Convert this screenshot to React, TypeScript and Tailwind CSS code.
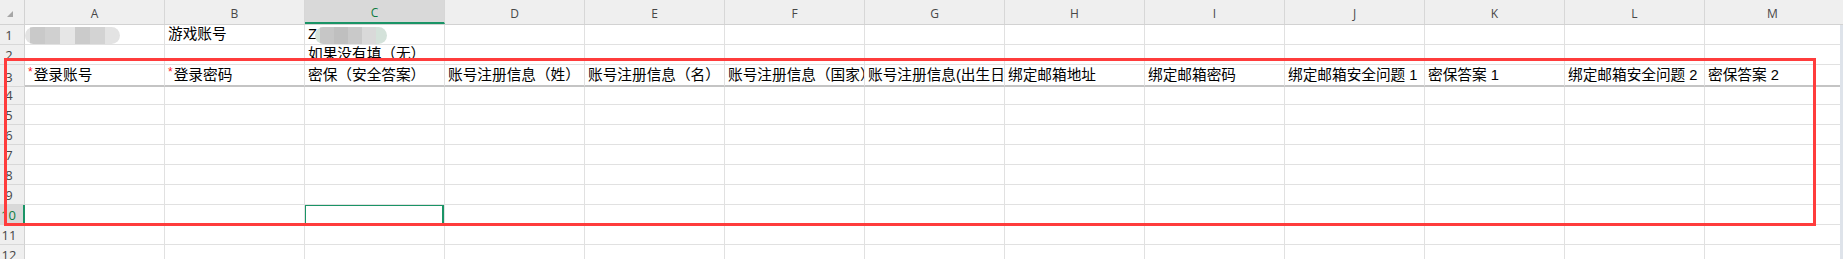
import React from "react"

const cols = ["A", "B", "C", "D", "E", "F", "G", "H", "I", "J", "K", "L", "M"]
const textFont = "font-['Liberation_Sans','Noto_Sans_CJK_SC',sans-serif]"

// blurred placeholder blocks used where the original had masked values
function Blob({ blocks, edge }: { blocks: string[]; edge: string }) {
  return (
    <div className="flex h-[17px] overflow-hidden rounded-full blur-[0.6px]" style={{ backgroundColor: edge }}>
      <div className="w-[5px]" />
      {blocks.map((c, i) => (
        <div key={i} className="w-[15px]" style={{ backgroundColor: c }} />
      ))}
      <div className="w-[12px]" />
    </div>
  )
}

function Star({ children }: { children: React.ReactNode }) {
  return (
    <>
      <span className="text-[#ff2020] text-[12px] relative top-[-3px] mr-[1px]">*</span>
      {children}
    </>
  )
}

const row3 = [
  <Star>登录账号</Star>,
  <Star>登录密码</Star>,
  "密保（安全答案）",
  "账号注册信息（姓）",
  "账号注册信息（名）",
  "账号注册信息（国家）",
  "账号注册信息(出生日期)",
  "绑定邮箱地址",
  "绑定邮箱密码",
  "绑定邮箱安全问题 1",
  "密保答案 1",
  "绑定邮箱安全问题 2",
  "密保答案 2",
]

const rows: { n: number; h: string; cells: Record<number, React.ReactNode> }[] = [
  {
    n: 1,
    h: "h-[20px]",
    cells: {
      0: (
        <div className="absolute left-0 top-[2px] w-[95px]">
          <Blob blocks={["#c9c9c9", "#d0d0d0", "#e6e6e6", "#cbcbcb", "#d3d3d3"]} edge="#e3e3e3" />
        </div>
      ),
      1: "游戏账号",
      2: (
        <>
          <span>Z</span>
          <div className="absolute left-[10px] top-[2px] w-[72px]">
            <Blob blocks={["#c6c6c6", "#bfbfbf", "#c9c9c9", "#d9d9d9"]} edge="#d4e2da" />
          </div>
        </>
      ),
    },
  },
  { n: 2, h: "h-[20px]", cells: { 2: "如果没有填（无）" } },
  { n: 3, h: "h-[22px]", cells: Object.fromEntries(row3.map((c, i) => [i, c])) },
  { n: 4, h: "h-[18px]", cells: {} },
  ...[5, 6, 7, 8, 9, 10, 11, 12].map((n) => ({ n, h: "h-[20px]", cells: {} })),
]

export default function App() {
  return (
    <div className="relative w-[1843px] h-[259px] overflow-hidden bg-white">
      {/* column headers */}
      <div className="flex h-[25px] bg-[#efefef] border-b border-[#d2d2d2]">
        <div className="relative w-[25px] shrink-0 border-r border-[#d2d2d2]">
          <div className="absolute left-[7px] top-[11px] w-0 h-0 border-l-[6px] border-l-transparent border-b-[6px] border-b-[#a6a6a6]" />
        </div>
        {cols.map((c, i) => (
          <div
            key={c}
            className={`flex items-center justify-center pt-[3px] shrink-0 ${i === 12 ? "w-[135px]" : "w-[140px] border-r border-[#d7d7d7]"} font-['Open_Sans',sans-serif] text-[12px] ${
              c === "C" ? "bg-[#d9d9d9] text-[#107c41] border-b-2 border-b-[#1a9466]" : "text-[#474747]"
            }`}
          >
            {c}
          </div>
        ))}
        <div className="w-[3px] shrink-0" />
      </div>

      {rows.map((r) => (
        <div key={r.n} className={`flex ${r.h}`}>
          <div
            className={`flex items-end justify-center pr-[6px] pb-[2px] w-[25px] shrink-0 border-b border-[#d8d8d8] font-['Open_Sans',sans-serif] text-[13px] leading-none ${
              r.n === 10 ? "bg-[#d9d9d9] text-[#107c41] border-r-2 border-r-[#1a9466]" : "bg-[#efefef] text-[#474747] border-r border-r-[#d2d2d2]"
            }`}
          >
            {r.n}
          </div>
          {cols.map((c, i) => (
            <div
              key={c}
              className={`relative flex items-end shrink-0 whitespace-nowrap pl-[3px] pb-[1px] ${i === 12 ? "w-[135px]" : "w-[140px] border-r border-r-[#e1e1e1]"} ${
                r.n === 3 ? "border-b-2 border-b-[#c4c4c4]" : "border-b border-b-[#e1e1e1]"
              } ${r.n === 1 ? "" : "overflow-hidden"} ${textFont} text-[14.67px] leading-[18px] text-black`}
            >
              {r.cells[i]}
              {r.n === 10 && c === "C" && (
                <>
                  <div className="absolute left-[-1px] top-[-1px] w-[140px] h-[21px] border-2 border-[#1a9466]" />
                  <div className="absolute left-[136px] top-[18px] w-[6px] h-[6px] bg-[#1a9466] border border-white" />
                </>
              )}
            </div>
          ))}
          <div className="w-[3px] shrink-0 bg-[#dee3ea]" />
        </div>
      ))}

      {/* highlight box drawn over the sheet */}
      <div className="absolute left-[4px] top-[58px] w-[1812px] h-[168px] border-[3px] border-[#ff3c3c] pointer-events-none" />
    </div>
  )
}
